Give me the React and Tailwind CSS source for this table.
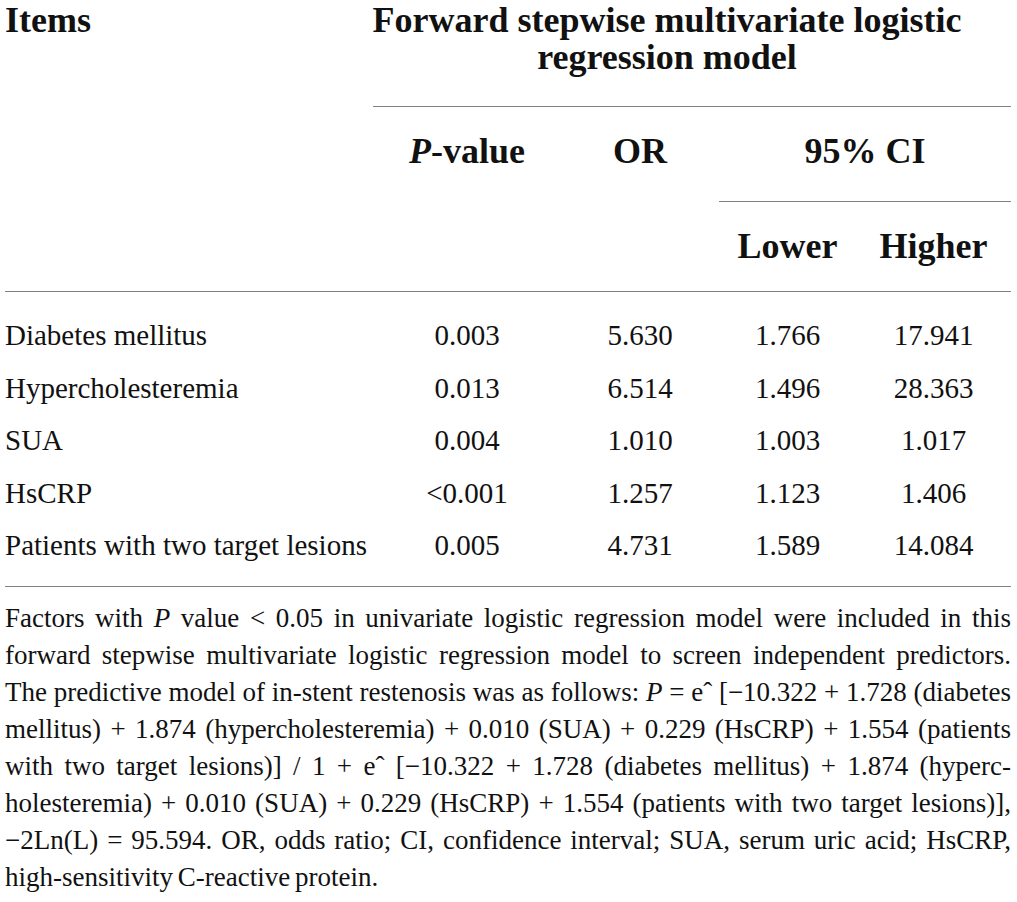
export default function App() {
  const rows = [
    ["Diabetes mellitus", "0.003", "5.630", "1.766", "17.941"],
    ["Hypercholesteremia", "0.013", "6.514", "1.496", "28.363"],
    ["SUA", "0.004", "1.010", "1.003", "1.017"],
    ["HsCRP", "<0.001", "1.257", "1.123", "1.406"],
    ["Patients with two target lesions", "0.005", "4.731", "1.589", "14.084"],
  ];
  const J = "text-justify [text-align-last:justify]";
  return (
    <div className="bg-white min-h-screen w-[1017px] pl-[5px] font-['Liberation_Serif',serif] text-[#111]">
      <div className="w-[1006px]">
        {/* header row 1 */}
        <div className="grid grid-cols-[368px_638px] text-[36px] leading-[37px] font-bold">
          <div className="pt-[2px]">Items</div>
          <div className="pt-[2px] pb-[30px] border-b border-[#808080]">
            <div className="flex flex-col items-center w-[588px] whitespace-nowrap">
              <div>Forward stepwise multivariate logistic</div>
              <div>regression model</div>
            </div>
          </div>
        </div>
        {/* header row 2 */}
        <div className="grid grid-cols-[368px_188px_158px_292px] text-[36px] leading-[38px] font-bold">
          <div />
          <div className="pt-[25px] text-center">
            <span className="italic">P</span>-value
          </div>
          <div className="pt-[25px] text-center">OR</div>
          <div className="pt-[25px] pb-[31px] text-center border-b border-[#808080]">95% CI</div>
        </div>
        {/* header row 3 */}
        <div className="grid grid-cols-[368px_188px_158px_137px_155px] text-[36px] leading-[38px] font-bold border-b border-[#808080]">
          <div />
          <div />
          <div />
          <div className="pt-[25px] pb-[26px] text-center">Lower</div>
          <div className="pt-[25px] pb-[26px] text-center">Higher</div>
        </div>
        {/* body */}
        <div className="pt-[17px] pb-[14px] border-b border-[#808080] text-[29px] leading-[52.5px]">
          {rows.map((r) => (
            <div key={r[0]} className="grid grid-cols-[368px_188px_158px_137px_155px] whitespace-nowrap">
              <div>{r[0]}</div>
              <div className="text-center">{r[1]}</div>
              <div className="text-center">{r[2]}</div>
              <div className="text-center">{r[3]}</div>
              <div className="text-center">{r[4]}</div>
            </div>
          ))}
        </div>
        {/* footnote */}
        <div className="pt-[13px] text-[27px] leading-[37px] [word-spacing:-2px]">
          <div className={J}>
            Factors with <i>P</i> value &lt; 0.05 in univariate logistic regression model were included in this
          </div>
          <div className={J}>
            forward stepwise multivariate logistic regression model to screen independent predictors.
          </div>
          <div className={J}>
            The predictive model of in-stent restenosis was as follows: <i>P</i> = eˆ [−10.322 + 1.728 (diabetes
          </div>
          <div className={J}>
            mellitus) + 1.874 (hypercholesteremia) + 0.010 (SUA) + 0.229 (HsCRP) + 1.554 (patients
          </div>
          <div className={J}>
            with two target lesions)] / 1 + eˆ [−10.322 + 1.728 (diabetes mellitus) + 1.874 (hyperc-
          </div>
          <div className={J}>
            holesteremia) + 0.010 (SUA) + 0.229 (HsCRP) + 1.554 (patients with two target lesions)],
          </div>
          <div className={J}>
            −2Ln(L) = 95.594. OR, odds ratio; CI, confidence interval; SUA, serum uric acid; HsCRP,
          </div>
          <div>high-sensitivity C-reactive protein.</div>
        </div>
      </div>
    </div>
  );
}
